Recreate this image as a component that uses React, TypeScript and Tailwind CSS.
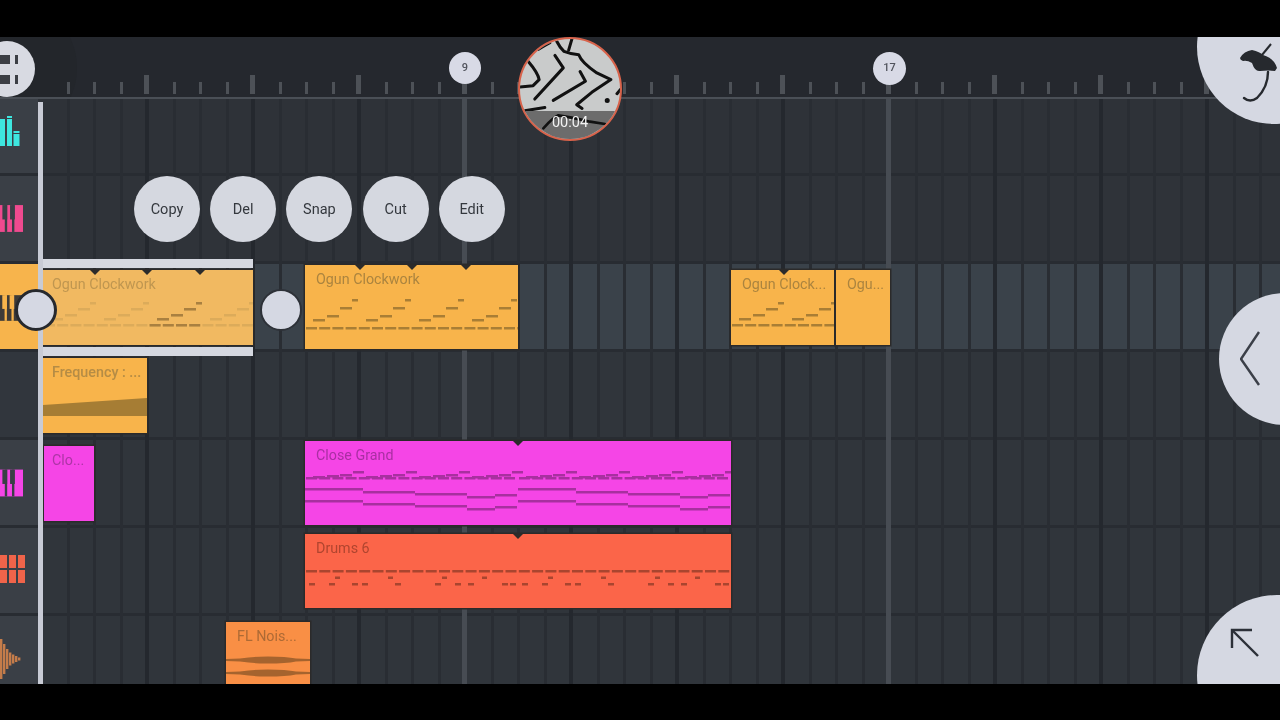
import * as React from "react";

type Note = [number, number, number];

const buttons = ["Copy", "Del", "Snap", "Cut", "Edit"];
const cells = Array.from({ length: 47 }, (_, i) => i);

const repeat = (count: number, fn: (i: number) => Note[]) =>
    Array.from({ length: count }, (_, i) => fn(i)).flat();

// ys: base line, then the four rising notes
const ogunNotes = (width: number, ys: number[]): Note[] =>
    [
        ...repeat(17, (i) => [[i * 13.2 + 1, ys[0], 11] as Note]),
        ...repeat(4, (i) => {
            const x = i * 53;
            return [
                [x + 8, ys[1], 12],
                [x + 22, ys[2], 12],
                [x + 35, ys[3], 12],
                [x + 47, ys[4], 6],
            ] as Note[];
        }),
    ].filter((n) => n[0] < width) as Note[];

const smallYs = [54, 48, 44, 38, 32];
const tallYs = [62, 54, 50, 42, 34];

const selectedNotes = ogunNotes(210, smallYs);

const grandNotes: Note[] = repeat(2, (p) => {
    const x = p * 213;
    const line = (y: number) =>
        [
            [x, y, 58],
            [x + 58, y + 3, 52],
            [x + 110, y + 5, 52],
            [x + 162, y + 8, 28],
            [x + 190, y + 6, 22],
        ] as Note[];
    return [
        ...line(47),
        ...line(59),
        ...repeat(16, (i) => [[x + i * 13.2 + 1, 36, 11] as Note]),
        ...repeat(4, (i) => {
            const s = x + i * 53;
            return [
                [s + 8, 35, 12],
                [s + 22, 34, 12],
                [s + 35, 33, 12],
                [s + 48, 30, 11],
            ] as Note[];
        }),
    ];
});

const drumNotes: Note[] = [
    ...repeat(32, (i) => [[i * 13.3 + 1, 36, 11] as Note]),
    ...repeat(2, (p) =>
        [30, 83, 137, 177].map((x) => [p * 213 + x, 42.5, 5] as Note),
    ),
    ...repeat(2, (p) =>
        [4, 24, 47, 57, 90, 130, 150, 163, 197, 205].map(
            (x) => [p * 213 + x, 49, 6] as Note,
        ),
    ),
];

function Notes({ notes, color }: { notes: Note[]; color: string }) {
    return (
        <svg className="absolute left-0 top-0 h-full w-full">
            {notes.map(([x, y, w], i) => (
                <rect key={i} x={x} y={y} width={w} height={2.5} fill={color} />
            ))}
        </svg>
    );
}

function Marker({ className }: { className: string }) {
    return (
        <div
            className={`absolute top-0 h-0 w-0 border-x-[5px] border-t-[5px] border-x-transparent border-t-[#2b2b2b] ${className}`}
        />
    );
}

function Clip({
    name,
    className,
    textClass,
    children,
}: {
    name: string;
    className: string;
    textClass: string;
    children?: React.ReactNode;
}) {
    return (
        <div className={`absolute z-10 overflow-hidden pt-[4px] shadow-[0_0_0_1.5px_#2b2a2a] ${className}`}>
            <span className={`block whitespace-nowrap text-[14.3px] leading-5 ${textClass}`}>{name}</span>
            {children}
        </div>
    );
}

function Piano({ color, gap, className }: { color: string; gap: string; className: string }) {
    return (
        <svg viewBox="0 0 24 28" className={className}>
            <rect x="0" y="0" width="24" height="28" fill={color} />
            <rect x="5" y="0" width="2.5" height="28" fill={gap} />
            <rect x="12.5" y="0" width="2.5" height="28" fill={gap} />
            <rect x="2.5" y="0" width="5" height="15" fill={gap} />
            <rect x="10.5" y="0" width="5" height="15" fill={gap} />
        </svg>
    );
}

function Row({
    className,
    cellClass = "bg-[#3a3f46]",
    icon,
    children,
}: {
    className: string;
    cellClass?: string;
    icon?: React.ReactNode;
    children?: React.ReactNode;
}) {
    return (
        <div className={`relative flex shrink-0 border-b-[3px] border-[#282c32] ${className}`}>
            <div className={`flex w-[38px] shrink-0 items-center overflow-hidden ${cellClass}`}>{icon}</div>
            <div className="relative flex-1">{children}</div>
        </div>
    );
}

function Cell({ index }: { index: number }) {
    const major = index % 16 === 15;
    const big = index % 4 === 3;
    return (
        <div
            className={`h-full w-[26.5px] shrink-0 ${
                major
                    ? "border-r-[5px] border-[#474c53]"
                    : big
                      ? "border-r-4 border-[#24282e]"
                      : "border-r-[3px] border-[#292d33]"
            }`}
        />
    );
}

function Tick({ index }: { index: number }) {
    const big = index % 4 === 3;
    return (
        <div className="flex h-full w-[26.5px] shrink-0 items-end justify-end">
            <div className={big ? "h-[19px] w-[5px] bg-[#4d5157]" : "h-[12px] w-[3px] bg-[#4d5157]"} />
        </div>
    );
}

export default function App() {
    return (
        <div className="flex h-[720px] w-[1280px] flex-col overflow-hidden bg-black font-['Roboto',sans-serif]">
            <div className="h-[37px] shrink-0 bg-black" />

            <main className="relative h-[647px] shrink-0 overflow-hidden bg-[#30353b] blur-[0.4px]">
                {/* ruler */}
                <div className="relative h-[62px] overflow-hidden border-b-2 border-[#4a4f56] bg-[#25282e] pb-[3px] pl-[43px]">
                    <div className="absolute left-[-63px] top-[-39px] h-[140px] w-[140px] rounded-full bg-[#23262b]" />
                    <div className="relative flex h-full">
                        {cells.map((i) => (
                            <Tick key={i} index={i} />
                        ))}
                    </div>
                </div>

                {/* beat lines */}
                <div className="absolute bottom-0 left-[43px] top-[62px] z-[1] flex">
                    {cells.map((i) => (
                        <Cell key={i} index={i} />
                    ))}
                </div>

                <div className="flex flex-col">
                    <Row
                        className="h-[77px] bg-[#2e3238]"
                        icon={
                            <svg viewBox="0 0 20 30" className="mt-[-10px] h-[30px] w-[20px]">
                                <rect x="0" y="3" width="5" height="27" fill="#3ee6df" />
                                <rect x="7" y="0" width="5" height="2" fill="#3ee6df" />
                                <rect x="7" y="3" width="5" height="27" fill="#3ee6df" />
                                <rect x="13.5" y="15" width="6" height="2" fill="#3ee6df" />
                                <rect x="13.5" y="18" width="6" height="12" fill="#3ee6df" />
                            </svg>
                        }
                    />
                    <Row
                        className="h-[88px] bg-[#2f3339]"
                        icon={<Piano color="#ef4a8f" gap="#3a3f46" className="h-[27px] w-[23px]" />}
                    />

                    <Row
                        className="h-[88px] bg-[#3a424a]"
                        cellClass="bg-[#f7b44c]"
                        icon={<Piano color="#3e3b38" gap="#f7b44c" className="mt-[2px] h-[30px] w-[22px]" />}
                    >
                        {/* selected clip */}
                        <div className="absolute left-[5px] top-[-5px] z-10 h-[9px] w-[210px] bg-[#d5d8e0]" />
                        <div className="absolute left-[5px] top-[83px] z-10 h-[9px] w-[210px] bg-[#d5d8e0]" />
                        <Clip
                            name="Ogun Clockwork"
                            className="left-[5px] top-[6px] h-[75px] w-[210px] bg-[#f1b961] pl-[9px]"
                            textClass="text-[#bf9650]"
                        >
                            <Notes notes={selectedNotes} color="#dcab5a" />
                            <Notes
                                notes={selectedNotes.filter((n) => n[0] >= 104 && n[0] < 158)}
                                color="#a98040"
                            />
                            <Marker className="left-[47px]" />
                            <Marker className="left-[99px]" />
                            <Marker className="left-[152px]" />
                        </Clip>
                        <Clip
                            name="Ogun Clockwork"
                            className="left-[267px] top-[1px] h-[84px] w-[213px] bg-[#f8b44b] pl-[11px]"
                            textClass="text-[#ab843f]"
                        >
                            <Notes notes={ogunNotes(213, tallYs)} color="#a97e35" />
                            <Marker className="left-[50px]" />
                            <Marker className="left-[102px]" />
                            <Marker className="left-[156px]" />
                        </Clip>
                        <Clip
                            name="Ogun Clock..."
                            className="left-[693px] top-[6px] h-[75px] w-[103px] bg-[#f8b44b] pl-[11px]"
                            textClass="text-[#ab843f]"
                        >
                            <Notes notes={ogunNotes(103, smallYs)} color="#a97e35" />
                            <Marker className="left-[48px]" />
                        </Clip>
                        <Clip
                            name="Ogu..."
                            className="left-[798px] top-[6px] h-[75px] w-[54px] bg-[#f8b44b] pl-[11px]"
                            textClass="text-[#ab843f]"
                        />
                    </Row>

                    <Row className="h-[88px] bg-[#30353b]" cellClass="bg-[#31363d]">
                        <Clip
                            name="Frequency : ..."
                            className="left-[5px] top-[6px] h-[75px] w-[104px] bg-[#f8b44b] pl-[9px]"
                            textClass="text-[#b58c45] font-medium"
                        >
                            <svg className="absolute left-0 top-0 h-full w-full">
                                <polygon points="0,47 104,40 104,58 0,58" fill="#a67d34" />
                            </svg>
                        </Clip>
                    </Row>

                    <Row
                        className="h-[88px] bg-[#30353b]"
                        icon={<Piano color="#f545e6" gap="#3a3f46" className="h-[28px] w-[23px]" />}
                    >
                        <Clip
                            name="Clo..."
                            className="left-[6px] top-[6px] h-[75px] w-[50px] bg-[#f545e6] pl-[8px]"
                            textClass="text-[#ad35a6]"
                        />
                        <Clip
                            name="Close Grand"
                            className="left-[267px] top-[1px] h-[84px] w-[426px] bg-[#f545e6] pl-[11px]"
                            textClass="text-[#a92fa3]"
                        >
                            <Notes notes={grandNotes} color="#a8309f" />
                            <Marker className="left-[208px]" />
                        </Clip>
                    </Row>

                    <Row
                        className="h-[88px] bg-[#30353b]"
                        icon={
                            <svg viewBox="0 0 25 28" className="mt-[-4px] h-[28px] w-[25px]">
                                {[0, 9, 18].map((x) =>
                                    [0, 15].map((y) => (
                                        <rect key={`${x}-${y}`} x={x} y={y} width="7" height="13" fill="#f0644a" />
                                    )),
                                )}
                            </svg>
                        }
                    >
                        <Clip
                            name="Drums 6"
                            className="left-[267px] top-[6px] h-[74px] w-[426px] bg-[#fb6549] pl-[11px]"
                            textClass="text-[#b0452f]"
                        >
                            <Notes notes={drumNotes} color="#a9452f" />
                            <Marker className="left-[208px]" />
                        </Clip>
                    </Row>

                    <Row
                        className="h-[88px] bg-[#30353b]"
                        icon={
                            <svg viewBox="0 0 21 40" className="h-[40px] w-[21px]" fill="#c47c4a">
                                {[
                                    [0, 40],
                                    [3, 30],
                                    [6, 20],
                                    [9, 13],
                                    [12, 9],
                                    [15, 6],
                                    [18, 3],
                                ].map(([x, h]) => (
                                    <rect key={x} x={x} y={20 - h / 2} width="2.4" height={h} />
                                ))}
                            </svg>
                        }
                    >
                        <Clip
                            name="FL Nois..."
                            className="left-[188px] top-[6px] h-[70px] w-[84px] bg-[#f98f45] pl-[11px]"
                            textClass="text-[#ad6a35]"
                        >
                            <svg className="absolute left-0 top-0 h-full w-full" fill="#a5632e">
                                <path d="M0 37 L14 36.5 Q26 34.5 42 34.5 Q60 34.5 70 36.5 L84 37 L84 39 L70 39.5 Q60 41.5 42 41.5 Q26 41.5 14 39.5 L0 39 Z" />
                                <path d="M0 50 L14 49.5 Q26 47.5 42 47.5 Q60 47.5 70 49.5 L84 50 L84 52 L70 52.5 Q60 54.5 42 54.5 Q26 54.5 14 52.5 L0 52 Z" />
                            </svg>
                        </Clip>
                    </Row>
                </div>

                {/* playhead line */}
                <div className="absolute bottom-0 left-[38px] top-[65px] z-20 w-[5px] bg-[#c8cbd5]" />

                {/* top left round button */}
                <div className="absolute left-[-21px] top-[4px] z-30 flex h-[56px] w-[56px] items-center justify-end rounded-full bg-[#d8dae2] pr-[17px]">
                    <svg viewBox="0 0 18 29" className="h-[29px] w-[18px]" fill="#3c3f45">
                        <rect x="0" y="0" width="10" height="9" />
                        <rect x="15" y="0" width="3" height="9" />
                        <rect x="0" y="20" width="10" height="9" />
                        <rect x="15" y="20" width="3" height="9" />
                    </svg>
                </div>

                {/* bar labels */}
                <div className="absolute left-[449px] top-[15px] z-10 flex h-[32px] w-[32px] items-center justify-center rounded-full bg-[#d8dae6] text-[11px] font-medium text-[#50535c]">
                    9
                </div>
                <div className="absolute left-[873px] top-[15px] z-10 flex h-[33px] w-[33px] items-center justify-center rounded-full bg-[#d8dae6] text-[11px] font-medium text-[#50535c]">
                    17
                </div>

                {/* time thumb */}
                <div className="absolute left-[518px] top-0 z-30 h-[104px] w-[104px] overflow-hidden rounded-full border-2 border-[#d8634b] bg-[#c9cbcb]">
                    <svg
                        viewBox="205 23 310 310"
                        className="absolute left-[-2px] top-[-2px] h-[104px] w-[104px]"
                        fill="none"
                        stroke="#111"
                        strokeWidth="9"
                        strokeLinecap="round"
                        strokeLinejoin="round"
                    >
                        <path d="M265 60 Q285 48 300 40" />
                        <path d="M320 35 Q330 55 342 66 Q365 75 386 76 Q395 100 440 130 L482 150 L425 188 L380 225 L396 236" />
                        <path d="M315 78 L340 115 L255 208" />
                        <path d="M390 126 L406 155 L310 212" />
                        <path d="M235 95 Q265 130 268 150 L250 168 L210 172" />
                        <path d="M366 28 L356 62" />
                        <path d="M225 243 L285 233" />
                        <path d="M500 192 L510 180" />
                        <circle cx="471" cy="212" r="3" fill="#111" />
                    </svg>
                    <div className="absolute inset-x-0 bottom-0 flex h-[28px] justify-center bg-[#6c6c6c] pt-[2px] text-[14.5px] leading-5 text-[#f2f2f2]">
                        <svg
                            viewBox="205 243 310 84"
                            className="absolute left-[-2px] top-0 h-[28px] w-[104px]"
                            fill="none"
                            stroke="#111"
                            strokeWidth="8"
                            strokeLinecap="round"
                        >
                            <path d="M280 295 Q310 262 325 256 Q370 262 420 275 L465 282" />
                        </svg>
                        <span className="relative">00:04</span>
                    </div>
                </div>

                {/* clip actions */}
                <div className="absolute left-[134px] top-[139px] z-30 flex gap-[10.2px]">
                    {buttons.map((label) => (
                        <button
                            key={label}
                            className="flex h-[66px] w-[66px] items-center justify-center rounded-full bg-[#d5d8e0] pt-[1px] text-[14.5px] text-[#34383e]"
                        >
                            {label}
                        </button>
                    ))}
                </div>

                {/* resize handles */}
                <div className="absolute left-[15px] top-[252px] z-30 h-[42px] w-[42px] rounded-full border-[3px] border-[#26292e] bg-[#d5d8e3]" />
                <div className="absolute left-[260px] top-[252px] z-30 h-[42px] w-[42px] rounded-full border-[2px] border-[#2d3138] bg-[#d5d8e3]" />

                {/* right side buttons */}
                <div className="absolute left-[1197px] top-[-67px] z-30 h-[154px] w-[154px] rounded-full bg-[#d5d8e2]">
                    <svg viewBox="0 0 120 110" className="absolute left-[-37px] top-[60px] h-[110px] w-[120px]" fill="#26292e">
                        <path d="M80 28 Q84 21 92 20 Q100 22 103 25 Q114 28 117 38 L115 41 Q108 40 100 41 Q95 42 92 33 Q87 30 83 31 Q80 30 80 28 Z" />
                        <path d="M102 25 L111 14" stroke="#26292e" strokeWidth="2" fill="none" />
                        <path d="M108 42 Q108 57 97 68 Q90 73 84 68" stroke="#26292e" strokeWidth="2.4" fill="none" strokeLinecap="round" />
                    </svg>
                </div>
                <div className="absolute left-[1219px] top-[256px] z-30 flex h-[132px] w-[132px] items-center rounded-full bg-[#d5d8e2]">
                    <svg viewBox="0 0 20 56" className="ml-[21px] h-[56px] w-[20px]" fill="none" stroke="#3b3f48" strokeWidth="2.4">
                        <path d="M19 1 L1 28 L19 54" />
                    </svg>
                </div>
                <div className="absolute left-[1197px] top-[558px] z-30 h-[160px] w-[160px] rounded-full bg-[#d5d8e2]">
                    <svg viewBox="0 0 30 30" className="absolute left-[33px] top-[33px] h-[30px] w-[30px]" fill="none" stroke="#2c3038" strokeWidth="2.4">
                        <path d="M2 20 L2 2 L22 2" />
                        <path d="M2 2 L28 28" />
                    </svg>
                </div>
            </main>

            <div className="h-[36px] shrink-0 bg-black" />
        </div>
    );
}
